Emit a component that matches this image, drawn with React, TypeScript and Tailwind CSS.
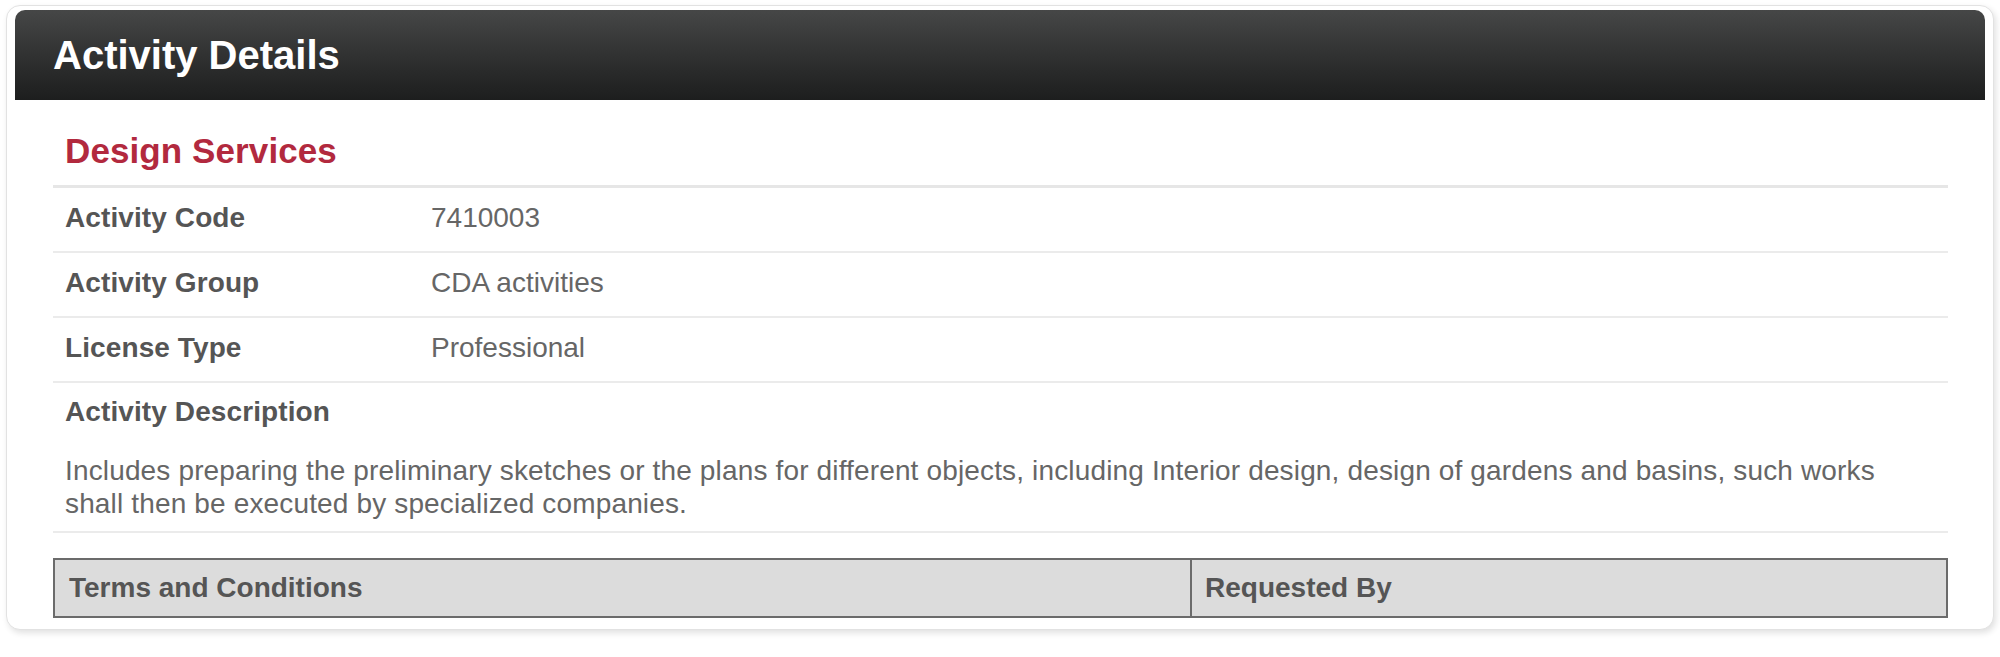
const DETAILS = [
  { label: "Activity Code", value: "7410003" },
  { label: "Activity Group", value: "CDA activities" },
  { label: "License Type", value: "Professional" },
];

function DetailRow({ label, value }: { label: string; value: string }) {
  return (
    <div className="flex border-b-2 border-[#ebebeb] pl-[12px] pt-[14px] pb-[17px] text-[28px] leading-[32px]">
      <div className="w-[366px] shrink-0 font-bold tracking-[0.1px] text-[#555555]">{label}</div>
      <div className="text-[#666666]">{value}</div>
    </div>
  );
}

export default function App() {
  return (
    <div className="min-h-[657px] bg-white pt-[5px] font-['Liberation_Sans',Arial,sans-serif]">
      <div className="mx-[6px] rounded-[14px] border border-[#e2e2e2] bg-white px-[8px] pt-[4px] pb-[11px] shadow-[2px_3px_6px_rgba(0,0,0,0.12)]">
        {/* Header */}
        <div className="flex h-[90px] items-center rounded-t-[10px] bg-gradient-to-b from-[#464747] to-[#1d1e1e] pl-[38px]">
          <h1 className="text-[40px] font-bold leading-none text-white">Activity Details</h1>
        </div>

        <div className="pl-[38px] pr-[37px]">
          <h2 className="border-b-[3px] border-[#e6e6e6] pt-[30px] pb-[13px] pl-[12px] text-[35px] font-bold leading-[42px] tracking-[0.1px] text-[#b2293e]">
            Design Services
          </h2>

          {DETAILS.map((d) => (
            <DetailRow key={d.label} label={d.label} value={d.value} />
          ))}

          {/* Description */}
          <div className="border-b-2 border-[#ebebeb] pl-[12px] pt-[13px] pb-[11px]">
            <div className="text-[28px] font-bold leading-[32px] tracking-[0.1px] text-[#555555]">Activity Description</div>
            <p className="mt-[26px] max-w-[1850px] text-[28px] leading-[33px] tracking-[0.15px] text-[#666666]">
              Includes preparing the preliminary sketches or the plans for different objects, including Interior
              design, design of gardens and basins, such works shall then be executed by specialized companies.
            </p>
          </div>

          {/* Table header */}
          <div className="mt-[25px] flex h-[60px] border-2 border-[#6b6b6b] bg-[#dcdcdc] text-[28px] font-bold text-[#555555]">
            <div className="flex w-[1137px] items-center border-r-2 border-[#6b6b6b] pl-[14px]">Terms and Conditions</div>
            <div className="flex flex-1 items-center pl-[13px]">Requested By</div>
          </div>
        </div>
      </div>
    </div>
  );
}
